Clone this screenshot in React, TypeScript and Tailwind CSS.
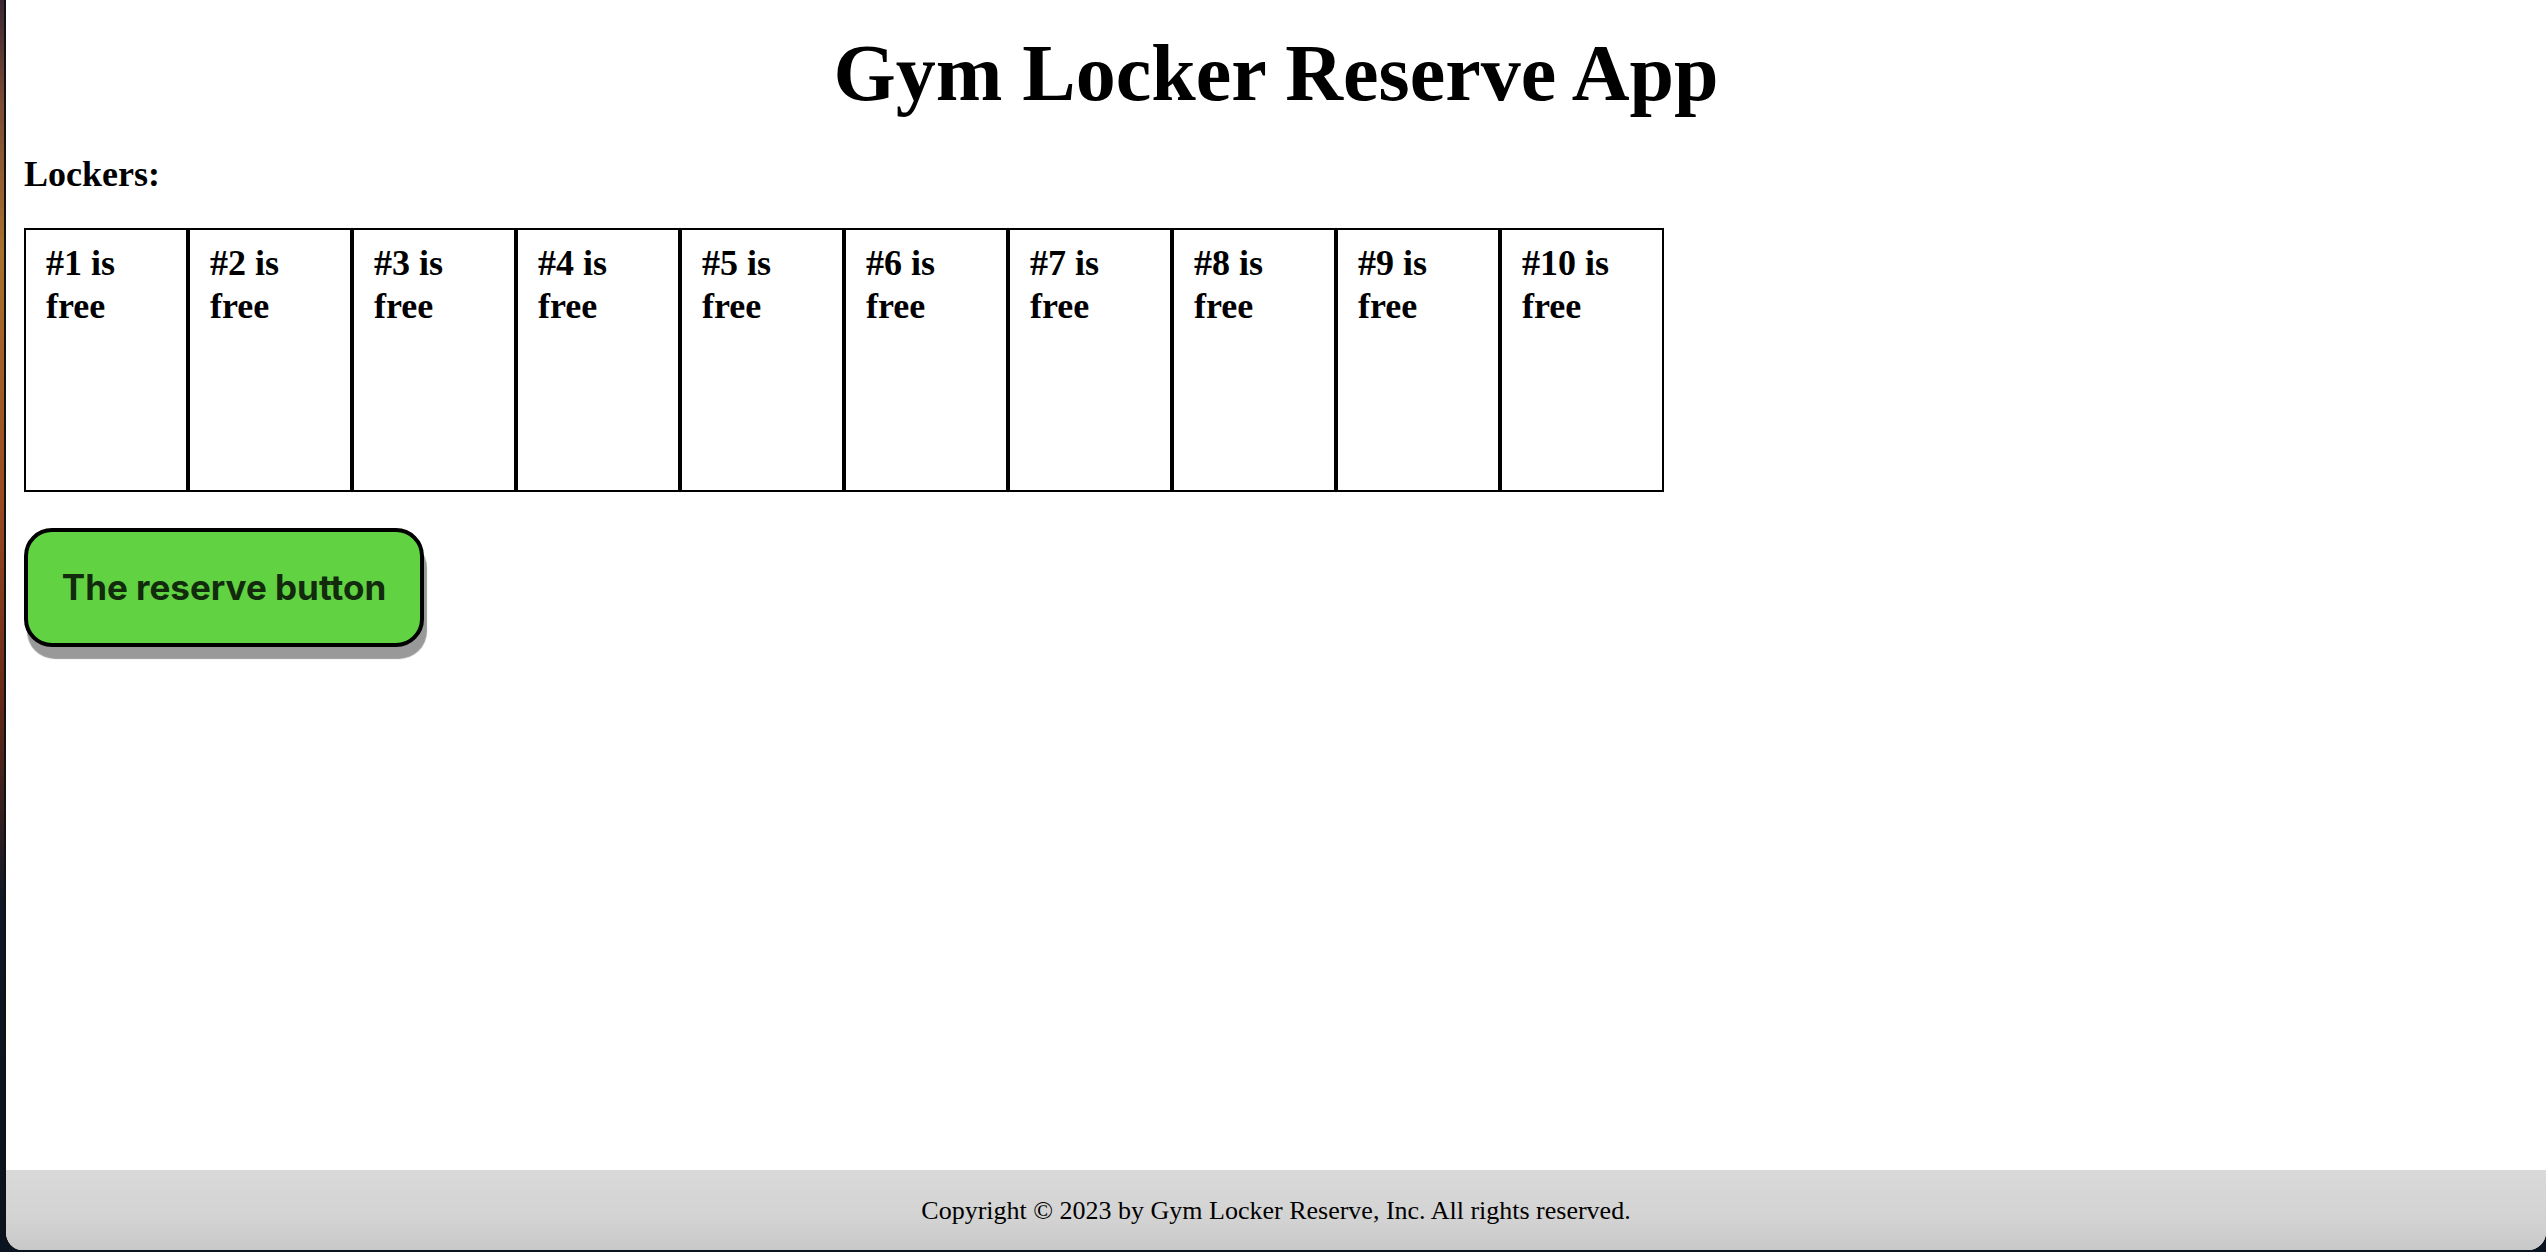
import React from "react";

const lockers = Array.from({ length: 10 }, (_, i) => i + 1);

export default function App() {
  return (
    <div className="w-[2546px] h-[1252px] overflow-hidden flex bg-[linear-gradient(180deg,#3a2733_0%,#7a4a34_8%,#a8702e_20%,#9a4a20_40%,#6a2a18_55%,#0e1826_72%,#0a1420_100%)]">
      <div className="ml-[4px] w-[2542px] h-[1250px] flex flex-col bg-white border-l-2 border-[#111] rounded-b-[18px] overflow-hidden">
        <main className="flex-1 flex flex-col pl-[18px] font-['Liberation_Serif','Times_New_Roman',serif] text-black">
          <h1 className="pt-[27px] text-center text-[80px] leading-[92px] font-bold -ml-[18px]">
            Gym Locker Reserve App
          </h1>
          <h3 className="mt-[34px] text-[36px] leading-[42px] font-bold">Lockers:</h3>
          <div className="mt-[33px] flex">
            {lockers.map((n) => (
              <div
                key={n}
                className="w-[164px] h-[264px] border-2 border-black pt-[12px] px-[20px] text-[36px] leading-[43px] font-bold"
              >
                #{n} is free
              </div>
            ))}
          </div>
          <div className="mt-[36px]">
            <button className="w-[400px] h-[119px] rounded-[28px] border-4 border-black bg-[#61d343] shadow-[3px_12px_1px_#999999] flex items-center justify-center font-['Inter',sans-serif] text-[35px] font-bold text-[#112b0c]">
              The reserve button
            </button>
          </div>
        </main>
        <footer className="h-[80px] flex items-center justify-center bg-[linear-gradient(180deg,#d9d9d9_0%,#d3d3d3_60%,#c8c8c8_100%)] font-['Liberation_Serif','Times_New_Roman',serif] text-[26px] text-black">
          Copyright © 2023 by Gym Locker Reserve, Inc. All rights reserved.
        </footer>
      </div>
    </div>
  );
}
